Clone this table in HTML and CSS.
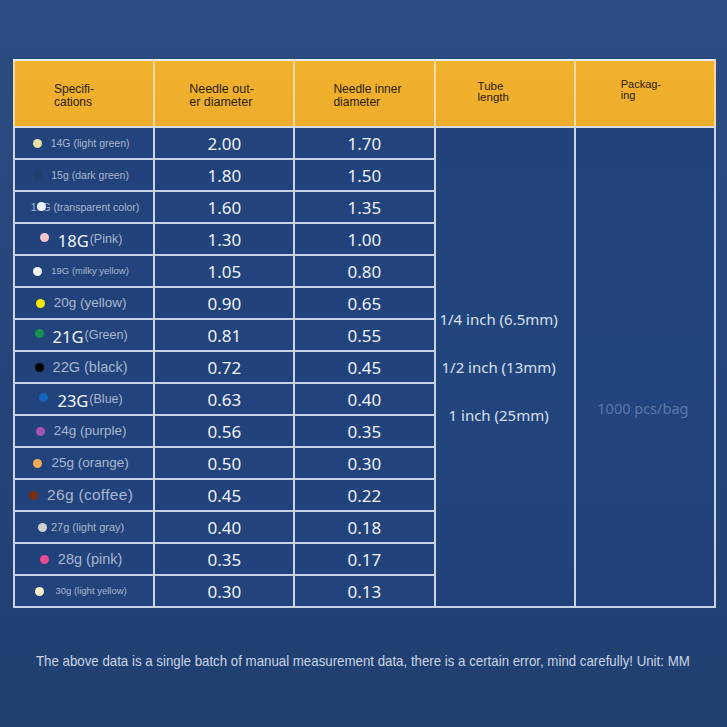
FILE: index.html
```html
<!DOCTYPE html>
<html lang="en">
<head>
<meta charset="utf-8">
<title>Needle specifications</title>
<link rel="stylesheet" href="styles.css">
</head>
<body>
<div class="page">
  <table class="spec">
    <thead>
      <tr>
        <th class="h1"><span>Specifi-<br>cations</span></th>
        <th class="h2"><span>Needle out-<br>er diameter</span></th>
        <th class="h3"><span>Needle inner<br>diameter</span></th>
        <th class="h4"><span>Tube<br>length</span></th>
        <th class="h5"><span>Packag-<br>ing</span></th>
      </tr>
    </thead>
    <tbody>
      <tr>
        <td class="name"><div class="lbl"><i class="dot d14"></i><span class="t10">14G (light green)</span></div></td>
        <td class="num">2.00</td><td class="num">1.70</td>
        <td class="tube" rowspan="15"><div class="tubes"><span>1/4 inch (6.5mm)</span><span>1/2 inch (13mm)</span><span>1 inch (25mm)</span></div></td>
        <td class="pack" rowspan="15"><span>1000 pcs/bag</span></td>
      </tr>
      <tr><td class="name"><div class="lbl"><i class="dot d15"></i><span class="t10">15g (dark green)</span></div></td><td class="num">1.80</td><td class="num">1.50</td></tr>
      <tr><td class="name"><div class="lbl over"><span class="t10">16G (transparent color)</span><i class="dot d16"></i></div></td><td class="num">1.60</td><td class="num">1.35</td></tr>
      <tr><td class="name"><div class="lbl"><i class="dot d18"></i><span class="big">18G</span><span class="sup">(Pink)</span></div></td><td class="num">1.30</td><td class="num">1.00</td></tr>
      <tr><td class="name"><div class="lbl"><i class="dot d19"></i><span class="t9">19G (milky yellow)</span></div></td><td class="num">1.05</td><td class="num">0.80</td></tr>
      <tr><td class="name"><div class="lbl"><i class="dot d20"></i><span class="t13">20g (yellow)</span></div></td><td class="num">0.90</td><td class="num">0.65</td></tr>
      <tr><td class="name"><div class="lbl"><i class="dot d21"></i><span class="big">21G</span><span class="sup">(Green)</span></div></td><td class="num">0.81</td><td class="num">0.55</td></tr>
      <tr><td class="name"><div class="lbl"><i class="dot d22"></i><span class="t14">22G (black)</span></div></td><td class="num">0.72</td><td class="num">0.45</td></tr>
      <tr><td class="name"><div class="lbl"><i class="dot d23"></i><span class="big">23G</span><span class="sup">(Blue)</span></div></td><td class="num">0.63</td><td class="num">0.40</td></tr>
      <tr><td class="name"><div class="lbl"><i class="dot d24"></i><span class="t13">24g (purple)</span></div></td><td class="num">0.56</td><td class="num">0.35</td></tr>
      <tr><td class="name"><div class="lbl"><i class="dot d25"></i><span class="t13">25g (orange)</span></div></td><td class="num">0.50</td><td class="num">0.30</td></tr>
      <tr><td class="name"><div class="lbl"><i class="dot d26"></i><span class="t15">26g (coffee)</span></div></td><td class="num">0.45</td><td class="num">0.22</td></tr>
      <tr><td class="name"><div class="lbl"><i class="dot d27"></i><span class="t11">27g (light gray)</span></div></td><td class="num">0.40</td><td class="num">0.18</td></tr>
      <tr><td class="name"><div class="lbl"><i class="dot d28"></i><span class="t14">28g (pink)</span></div></td><td class="num">0.35</td><td class="num">0.17</td></tr>
      <tr><td class="name"><div class="lbl"><i class="dot d30"></i><span class="t9">30g (light yellow)</span></div></td><td class="num">0.30</td><td class="num">0.13</td></tr>
    </tbody>
  </table>
  <p class="note"><span>The above data is a single batch of manual measurement data, there is a certain error, mind carefully! Unit: MM</span></p>
</div>
</body>
</html>
```

FILE: styles.css
```css
html, body {
  margin: 0;
  padding: 0;
}
body {
  width: 727px;
  height: 727px;
  overflow: hidden;
  background: linear-gradient(180deg, #2b4c80 0%, #26477c 40%, #1f3f71 100%);
  font-family: "Liberation Sans", Arial, sans-serif;
}
.page {
  padding: 59px 0 0 13px;
}
.spec {
  width: 703px;
  border-collapse: collapse;
  table-layout: fixed;
  border: 2px solid #c6d1e4;
}
.spec th {
  height: 65px;
  padding: 0;
  background: linear-gradient(180deg, #f1b22e 0%, #eeac2b 100%);
  border: 2px solid #f2d9a6;
  border-top-color: #e9eef6;
  border-bottom: 2px solid #d8dbe2;
  color: #2c1d08;
  font-weight: normal;
  font-size: 12px;
  line-height: 12.5px;
  text-align: left;
  vertical-align: middle;
}
.spec th span {
  display: block;
}
.h1 span { padding: 4px 0 0 39px; }
.h2 span { padding: 4px 0 0 34px; font-size: 12.5px; }
.h3 span { padding: 4px 0 0 38px; }
.h4 span { padding: 0 0 4px 42px; font-size: 11.5px; line-height: 11px; }
.h5 span { padding: 0 0 8px 45px; font-size: 11px; line-height: 11px; }

.spec td {
  height: 30px;
  padding: 0;
  border: 2px solid #c9d3e6;
  background: #21427a;
  color: #eef2fa;
}
.spec tbody tr:nth-child(odd) td.name,
.spec tbody tr:nth-child(odd) td.num {
  background: #22437b;
}
.name {
  text-align: center;
}
.lbl {
  display: flex;
  align-items: center;
  justify-content: center;
  height: 30px;
  overflow: visible;
  padding-right: 6px;
  color: #a9b7d0;
  white-space: nowrap;
  position: relative;
  line-height: 16px;
}
.dot {
  display: block;
  width: 9px;
  height: 9px;
  border-radius: 50%;
  margin-right: 9px;
  flex: none;
}
.over .dot {
  position: absolute;
  left: 22px;
  top: 50%;
  margin-top: -5px;
}
.over { padding-right: 0; padding-left: 2px; }
.d14 { background: #e7e2a4; }
.d15 { background: #1e416c; }
.d16 { background: #eef2fa; }
.d18 { background: #f2c3cf; margin-top: -4px; }
.d19 { background: #f6f6f2; }
.d20 { background: #f6e800; }
.d21 { background: #14914a; margin-top: -4px; }
.d22 { background: #000000; }
.d23 { background: #1463bd; margin-top: -4px; }
.d24 { background: #a552b4; }
.d25 { background: #f3ab55; }
.d26 { background: #78300c; }
.d27 { background: #cfcfcf; margin-right: 4px; }
.d28 { background: #e84a96; }
.d30 { background: #fff2cc; margin-right: 11px; }
.t9 { font-size: 9.5px; }
.t10 { font-size: 10.5px; }
.t11 { font-size: 11px; }
.t13 { font-size: 13.5px; }
.t14 { font-size: 14.5px; }
.t15 { font-size: 15.5px; letter-spacing: 0.3px; }
.big {
  font-family: "Noto Sans", "Open Sans", sans-serif;
  font-size: 16.5px;
  line-height: 18px;
  color: #f2f5fb;
  margin-top: 4px;
}
.sup {
  font-size: 12.5px;
  line-height: 14px;
  margin-top: -1px;
  margin-left: 1px;
}
.num {
  text-align: center;
  font-family: "Noto Sans", "Open Sans", sans-serif;
  font-size: 17px;
  line-height: 20px;
  color: #eef2fa;
}
.spec td.num {
  padding-top: 2px;
  height: 28px;
}
.tube, .pack {
  vertical-align: middle;
  text-align: center;
}
.spec td.tube, .spec td.pack {
  background: linear-gradient(180deg, #21427a 0%, #23457d 50%, #20417a 100%);
}
.tubes {
  display: flex;
  flex-direction: column;
  align-items: center;
  gap: 30px;
  padding-right: 12px;
  font-family: "Noto Sans", "Open Sans", sans-serif;
  font-size: 15px;
  line-height: 18px;
  color: #d8e0ef;
}
.pack span {
  display: block;
  padding: 82px 4px 0 0;
  font-family: "Noto Sans", "Open Sans", sans-serif;
  font-size: 14.5px;
  color: #5a76a6;
}
.note {
  width: 670px;
  overflow: hidden;
  margin: 44px 0 0 23px;
  font-family: "Liberation Sans", Arial, sans-serif;
  font-size: 15px;
  line-height: 18px;
  color: #c9d4e6;
  white-space: nowrap;
}
.note span {
  display: inline-block;
  transform: scaleX(0.885);
  transform-origin: 0 50%;
}
```
